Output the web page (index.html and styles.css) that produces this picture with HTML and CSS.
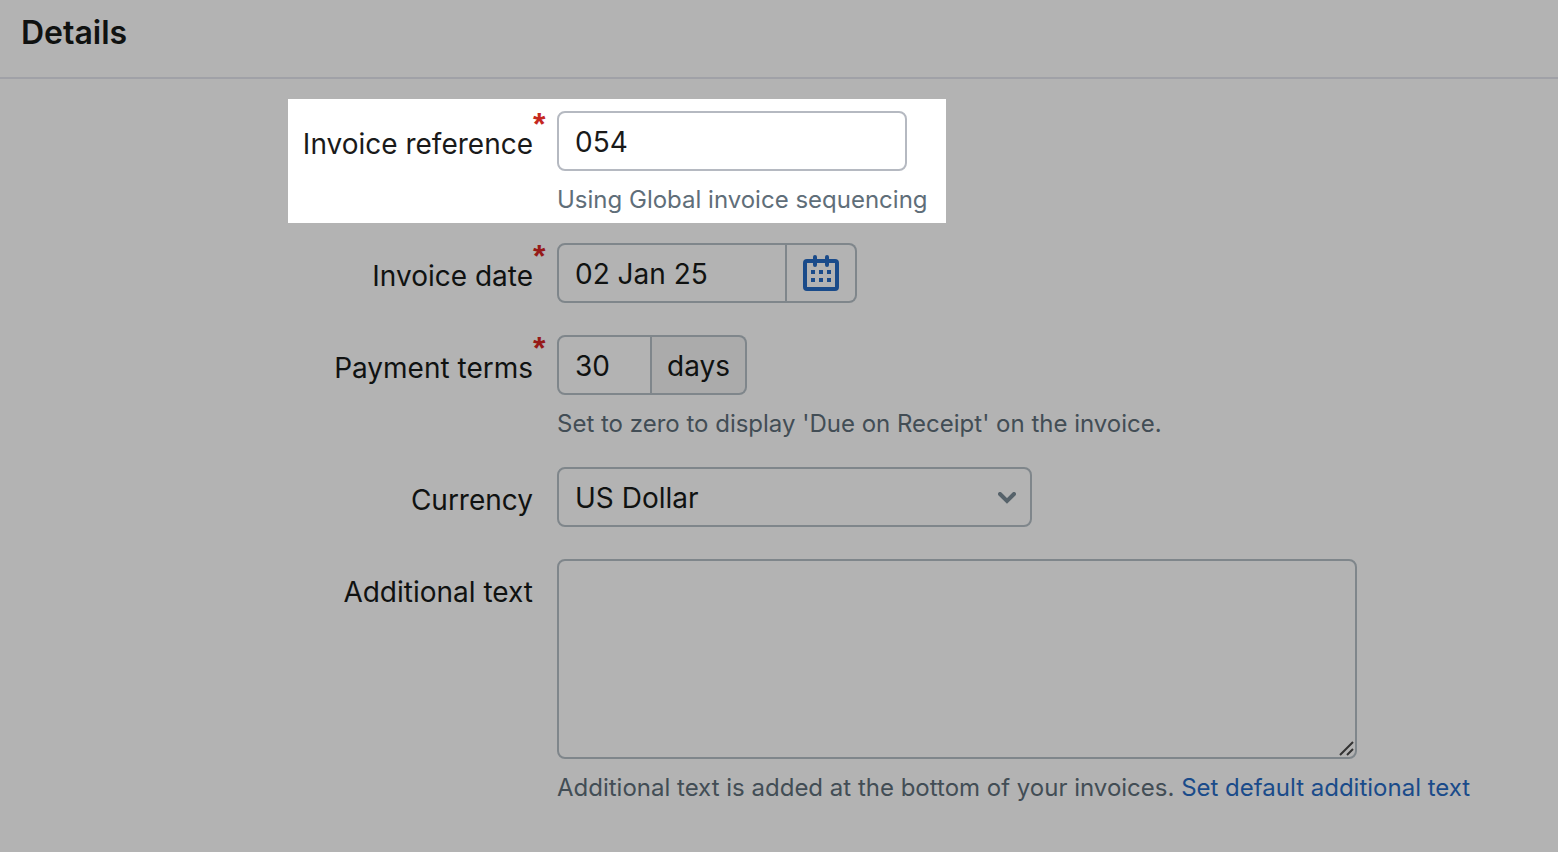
FILE: index.html
```
<!DOCTYPE html>
<html lang="en">
<head>
    <meta charset="UTF-8">
    <meta name="viewport" content="width=device-width, initial-scale=1.0">
    <title>Invoice details</title>
    <link rel="stylesheet" href="styles.css">
</head>
<body>
    <header class="header">
        <h1>Details</h1>
    </header>

    <form class="form">
        <div class="row highlight">
            <label class="label required" for="reference">Invoice reference</label>
            <div class="field">
                <input class="control reference" type="text" id="reference" value="054" required>
                <p class="hint">Using Global invoice sequencing</p>
            </div>
        </div>

        <div class="row">
            <label class="label required" for="date">Invoice date</label>
            <div class="field">
                <div class="group">
                    <input class="control date" type="text" id="date" value="02 Jan 25" required>
                    <button class="addon calendar" type="button" aria-label="Choose date">
                        <svg width="36" height="36" viewBox="0 0 36 36">
                            <rect x="2" y="6" width="32" height="28" rx="2" fill="none" stroke="currentColor" stroke-width="4"/>
                            <path d="M12 2v8M24 2v8" stroke="currentColor" stroke-width="4" stroke-linecap="round"/>
                            <path d="M8 17h4M16 17h4M24 17h4M8 25h4M16 25h4M24 25h4" stroke="currentColor" stroke-width="4"/>
                        </svg>
                    </button>
                </div>
            </div>
        </div>

        <div class="row">
            <label class="label required" for="terms">Payment terms</label>
            <div class="field">
                <div class="group">
                    <input class="control terms" type="text" id="terms" value="30" required>
                    <span class="addon days">days</span>
                </div>
                <p class="hint">Set to zero to display 'Due on Receipt' on the invoice.</p>
            </div>
        </div>

        <div class="row">
            <label class="label" for="currency">Currency</label>
            <div class="field">
                <div class="select">
                    <select class="control currency" id="currency">
                        <option>US Dollar</option>
                    </select>
                    <svg class="chevron" width="18" height="12" viewBox="0 0 18 12">
                        <path d="M2 2l7 7 7-7" fill="none" stroke="currentColor" stroke-width="4" stroke-linecap="round"/>
                    </svg>
                </div>
            </div>
        </div>

        <div class="row">
            <label class="label" for="additional">Additional text</label>
            <div class="field">
                <div class="textarea">
                    <textarea class="control additional" id="additional"></textarea>
                    <svg class="grip" width="16" height="16" viewBox="0 0 16 16">
                        <path d="M1 14L14 1M8 14l6-6" fill="none" stroke="currentColor" stroke-width="2"/>
                    </svg>
                </div>
                <p class="hint">Additional text is added at the bottom of your invoices. <a href="#">Set default additional text</a></p>
            </div>
        </div>
    </form>
</body>
</html>
```

FILE: styles.css
```
* {
    box-sizing: border-box;
}

body {
    margin: 0;
    background-color: #b3b3b3;
    color: #101211;
    font-family: 'Inter', sans-serif;
    font-size: 28px;
}

.header {
    padding: 13px 21px 24px;
    border-bottom: 2px solid #a0a1a7;
}

.header h1 {
    margin: 0;
    font-size: 32px;
    line-height: 40px;
    font-weight: 600;
}

.form {
    padding: 32px 0;
    display: flex;
    flex-direction: column;
    gap: 28px;
}

.row {
    display: grid;
    grid-template-columns: 533px 1fr;
    column-gap: 24px;
    min-height: 64px;
}

.label {
    position: relative;
    justify-self: end;
    line-height: 66px;
    height: 64px;
    white-space: nowrap;
}

.required::after {
    content: "*";
    position: absolute;
    left: 100%;
    top: 0;
    color: #961a18;
    font-family: 'Liberation Sans', sans-serif;
    font-size: 32px;
    font-weight: 700;
    line-height: 26px;
}

/* the row the walkthrough points at */
.highlight {
    grid-template-columns: 245px auto;
    width: fit-content;
    margin: -12px 0 -8px 288px;
    padding: 12px 18px 8px 0;
    background-color: #fff;
    color: #1a1a1a;
}

.highlight .required::after {
    color: #c5281f;
}

.control {
    display: block;
    height: 60px;
    padding: 2px 16px 0;
    border: 2px solid #7f868b;
    border-radius: 8px;
    background-color: transparent;
    color: inherit;
    font-family: inherit;
    font-size: inherit;
    outline: none;
}

.highlight .control {
    border-color: #b5b9c1;
}

.reference {
    width: 350px;
}

.group {
    display: flex;
}

.group .control {
    border-radius: 8px 0 0 8px;
}

.date {
    width: 230px;
}

.terms {
    width: 95px;
}

.addon {
    display: flex;
    align-items: center;
    justify-content: center;
    height: 60px;
    padding: 0 16px;
    border: 2px solid #7f868b;
    border-left: 0;
    border-radius: 0 8px 8px 0;
    background-color: transparent;
}

.calendar {
    color: #1a4b8a;
    cursor: pointer;
}

.days {
    width: 95px;
    padding-top: 2px;
    background-color: #ababab;
}

.select,
.textarea {
    position: relative;
    width: fit-content;
}

.currency {
    width: 475px;
    appearance: none;
}

.chevron {
    position: absolute;
    right: 16px;
    top: 25px;
    color: #56626a;
    pointer-events: none;
}

.additional {
    width: 800px;
    height: 200px;
    padding: 12px 16px;
    resize: none;
}

.grip {
    position: absolute;
    right: 2px;
    bottom: 2px;
    color: #333;
    pointer-events: none;
}

.hint {
    margin: 14px 0 0;
    color: #424d55;
    font-size: 24px;
    line-height: 30px;
}

.highlight .hint {
    color: #5f6e79;
}

.hint a {
    color: #1a4b8a;
    text-decoration: none;
}
```
